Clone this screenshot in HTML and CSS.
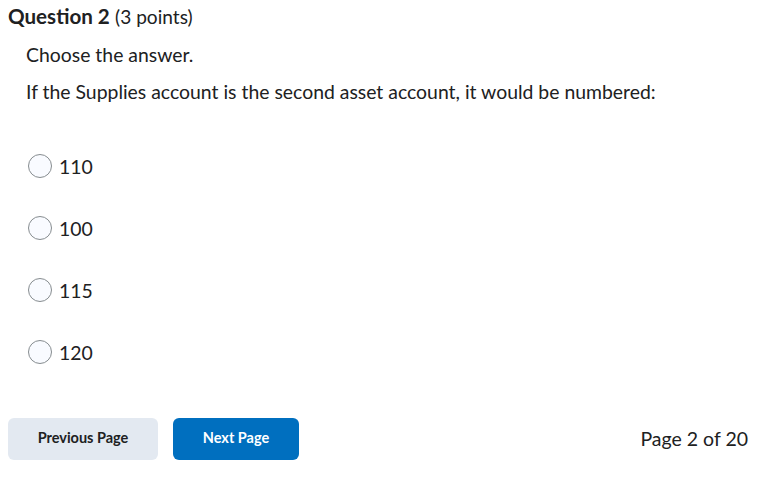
FILE: index.html
```html
<!DOCTYPE html>
<html>
<head>
<meta charset="utf-8">
<link rel="stylesheet" href="styles.css">
</head>
<body>
<div class="page">
  <h2 class="q-title"><strong>Question 2</strong> <span class="pts">(3 points)</span></h2>
  <div class="q-body">
    <p class="instr">Choose the answer.</p>
    <p class="stem">If the Supplies account is the second asset account, it would be numbered:</p>
    <div class="options">
      <label class="opt"><span class="radio"></span><span class="opt-text">110</span></label>
      <label class="opt"><span class="radio"></span><span class="opt-text">100</span></label>
      <label class="opt"><span class="radio"></span><span class="opt-text">115</span></label>
      <label class="opt"><span class="radio"></span><span class="opt-text">120</span></label>
    </div>
  </div>
  <div class="footer">
    <button class="btn btn-secondary">Previous Page</button>
    <button class="btn btn-primary">Next Page</button>
    <span class="pager">Page 2 of 20</span>
  </div>
</div>
</body>
</html>
```
FILE: styles.css
```css
html, body {
  margin: 0;
  padding: 0;
  background: #ffffff;
}
body {
  font-family: Lato, "Open Sans", sans-serif;
  color: #202122;
}
.page {
  padding: 4px 9px 0 8px;
}
.q-title {
  margin: 0;
  font-size: 20.6px;
  line-height: 24px;
  font-weight: 400;
}
.q-title strong {
  font-weight: 700;
}
.pts {
  font-size: 19.1px;
}
.q-body {
  padding-left: 18px;
}
.instr {
  margin: 12px 0 0 0;
  font-size: 19.4px;
  line-height: 28px;
}
.stem {
  margin: 9px 0 0 0;
  font-size: 19.4px;
  line-height: 28px;
}
.options {
  display: flex;
  flex-direction: column;
  gap: 38px;
  margin-top: 48px;
  padding-left: 2px;
}
.opt {
  display: flex;
  align-items: center;
  gap: 7px;
  height: 24px;
  font-size: 19.4px;
}
.radio {
  box-sizing: border-box;
  width: 24px;
  height: 24px;
  border-radius: 50%;
  border: 1px solid #868c8f;
  background: #f9fbff;
}
.footer {
  display: flex;
  align-items: center;
  gap: 15px;
  margin-top: 54px;
}
.btn {
  font-family: Lato, "Open Sans", sans-serif;
  font-size: 14.5px;
  font-weight: 700;
  height: 42px;
  border: none;
  border-radius: 6px;
  padding: 0 0 3px 0;
  cursor: pointer;
}
.btn-secondary {
  width: 150px;
  background: #e3e9f1;
  color: #202122;
}
.btn-primary {
  width: 126px;
  background: #006fbf;
  color: #ffffff;
}
.pager {
  margin-left: auto;
  font-size: 19.5px;
  padding-bottom: 2px;
}
```
